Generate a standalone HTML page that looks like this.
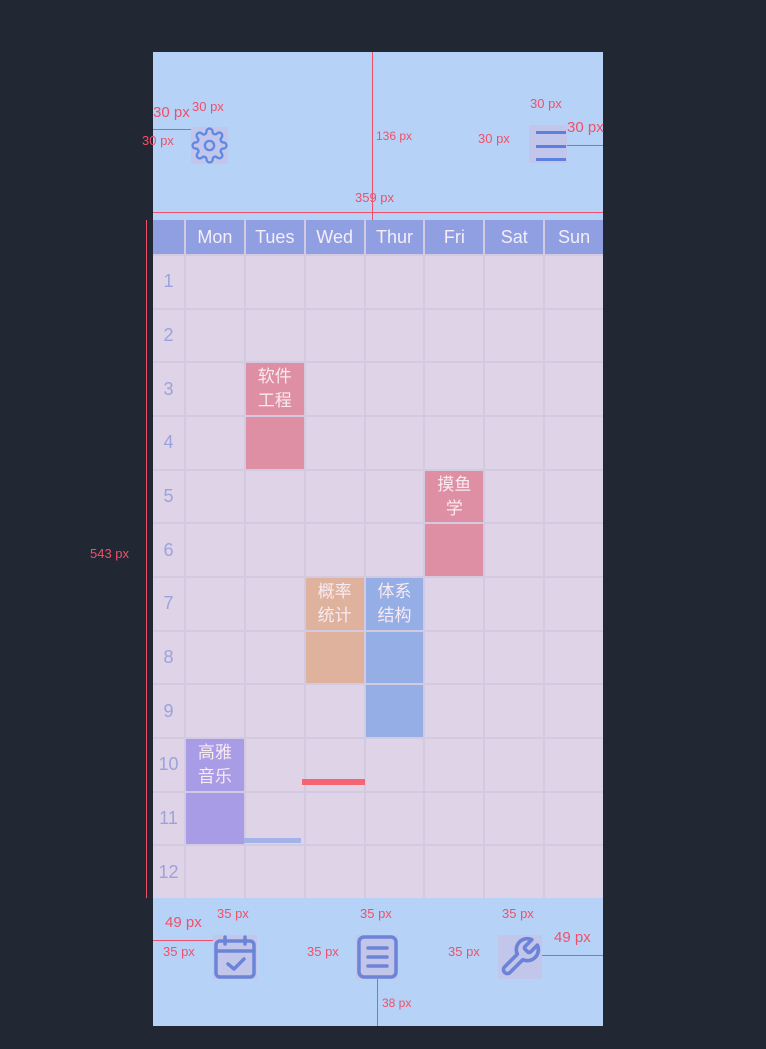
<!DOCTYPE html>
<html><head><meta charset="utf-8"><style>
*{margin:0;padding:0;box-sizing:border-box}
body{width:766px;height:1049px;background:#212733;position:relative;overflow:hidden;font-family:"Liberation Sans","Noto Sans CJK SC",sans-serif}
.frame{position:absolute;left:153px;top:52px;width:450px;height:974px;background:#b6d2f6}
.grid{position:absolute;left:153px;top:220px;width:450px;height:678px;display:grid;grid-template-columns:31px repeat(7,1fr);grid-template-rows:34px repeat(12,1fr);gap:2px;background:#d3cae2}
.grid div{background:#dfd3e7;display:flex;align-items:center;justify-content:center;text-align:center}
.grid .h{background:#8f9fe2;color:#f5eef8;font-size:18px}
.grid .n{color:#9ba3dd;font-size:18px}
.grid .c{color:#f8eaf0;font-size:17px;line-height:24px;align-items:flex-start;padding-top:2px}
.p{background:#df8fa3!important}.o{background:#dfb29e!important}.b{background:#95aee6!important}.v{background:#a99ce6!important}
.ann{position:absolute;color:#f0506a;font-size:13px;font-family:"Liberation Sans",sans-serif}
.ln{position:absolute;background:#f0506a}
.ib{position:absolute;background:#c3c6eb}
</style></head><body>
<div class="frame"></div>
<div class="grid">
<div class="h"></div><div class="h">Mon</div><div class="h">Tues</div><div class="h">Wed</div><div class="h">Thur</div><div class="h">Fri</div><div class="h">Sat</div><div class="h">Sun</div>
<div class="n">1</div><div></div><div></div><div></div><div></div><div></div><div></div><div></div>
<div class="n">2</div><div></div><div></div><div></div><div></div><div></div><div></div><div></div>
<div class="n">3</div><div></div><div class="c p">软件<br>工程</div><div></div><div></div><div></div><div></div><div></div>
<div class="n">4</div><div></div><div class="p"></div><div></div><div></div><div></div><div></div><div></div>
<div class="n">5</div><div></div><div></div><div></div><div></div><div class="c p">摸鱼<br>学</div><div></div><div></div>
<div class="n">6</div><div></div><div></div><div></div><div></div><div class="p"></div><div></div><div></div>
<div class="n">7</div><div></div><div></div><div class="c o">概率<br>统计</div><div class="c b">体系<br>结构</div><div></div><div></div><div></div>
<div class="n">8</div><div></div><div></div><div class="o"></div><div class="b"></div><div></div><div></div><div></div>
<div class="n">9</div><div></div><div></div><div></div><div class="b"></div><div></div><div></div><div></div>
<div class="n">10</div><div class="c v">高雅<br>音乐</div><div></div><div></div><div></div><div></div><div></div><div></div>
<div class="n">11</div><div class="v"></div><div></div><div></div><div></div><div></div><div></div><div></div>
<div class="n">12</div><div></div><div></div><div></div><div></div><div></div><div></div><div></div>
</div>
<div class="ln" style="left:302px;top:779px;width:63px;height:6px;background:#f56470"></div>
<div class="ln" style="left:244px;top:838px;width:57px;height:5px;background:#a3b2e8"></div>

<div class="ib" style="left:191px;top:127px;width:37px;height:37px"></div>
<svg style="position:absolute;left:191px;top:127px" width="37" height="37" viewBox="0 0 24 24" fill="none" stroke="#5b8ae8" stroke-width="1.5"><circle cx="12" cy="12" r="3"/><path d="M19.4 15a1.65 1.65 0 0 0 .33 1.82l.06.06a2 2 0 1 1-2.83 2.83l-.06-.06a1.65 1.65 0 0 0-1.82-.33 1.65 1.65 0 0 0-1 1.51V21a2 2 0 1 1-4 0v-.09A1.65 1.65 0 0 0 9 19.4a1.65 1.65 0 0 0-1.82.33l-.06.06a2 2 0 1 1-2.83-2.83l.06-.06A1.65 1.65 0 0 0 4.68 15a1.65 1.65 0 0 0-1.51-1H3a2 2 0 1 1 0-4h.09A1.65 1.65 0 0 0 4.6 9a1.65 1.65 0 0 0-.33-1.82l-.06-.06a2 2 0 1 1 2.83-2.83l.06.06A1.65 1.65 0 0 0 9 4.68a1.65 1.65 0 0 0 1-1.51V3a2 2 0 1 1 4 0v.09a1.65 1.65 0 0 0 1 1.51 1.65 1.65 0 0 0 1.82-.33l.06-.06a2 2 0 1 1 2.83 2.83l-.06.06A1.65 1.65 0 0 0 19.4 9a1.65 1.65 0 0 0 1.51 1H21a2 2 0 1 1 0 4h-.09a1.65 1.65 0 0 0-1.51 1z"/></svg>
<div class="ib" style="left:529px;top:125px;width:38px;height:38px"></div>
<div class="ln" style="left:536px;top:131px;width:30px;height:3px;background:#5b80e0"></div>
<div class="ln" style="left:536px;top:145px;width:30px;height:3px;background:#5b80e0"></div>
<div class="ln" style="left:536px;top:158px;width:30px;height:3px;background:#5b80e0"></div>

<div class="ib" style="left:213px;top:935px;width:44px;height:44px"></div>
<svg style="position:absolute;left:213px;top:935px" width="44" height="44" viewBox="0 0 44 44" fill="none" stroke="#6c84d8" stroke-width="3.5" stroke-linecap="round" stroke-linejoin="round"><rect x="3" y="6" width="38" height="36" rx="4"/><path d="M3 16h38M12 2v7M32 2v7M15 29l6 5 10-10"/></svg>
<div class="ib" style="left:356px;top:935px;width:42px;height:44px"></div>
<svg style="position:absolute;left:356px;top:935px" width="42" height="44" viewBox="0 0 42 44" fill="none" stroke="#6c84d8" stroke-width="3.5" stroke-linecap="round"><rect x="3" y="2" width="37" height="40" rx="5"/><path d="M12 13h19M12 22h19M12 31h19"/></svg>
<div class="ib" style="left:498px;top:935px;width:44px;height:44px"></div>
<svg style="position:absolute;left:498px;top:935px" width="44" height="44" viewBox="0 0 24 24" fill="none" stroke="#6c84d8" stroke-width="2" stroke-linejoin="round"><path d="M14.7 6.3a1 1 0 0 0 0 1.4l1.6 1.6a1 1 0 0 0 1.4 0l3.77-3.77a6 6 0 0 1-7.94 7.94l-6.91 6.91a2.12 2.12 0 0 1-3-3l6.91-6.91a6 6 0 0 1 7.94-7.94l-3.76 3.76z"/></svg>

<!-- annotations -->
<div class="ln" style="left:372px;top:52px;width:1px;height:168px"></div>
<div class="ln" style="left:153px;top:212px;width:450px;height:1px"></div>
<div class="ln" style="left:146px;top:220px;width:1px;height:678px"></div>
<div class="ln" style="left:153px;top:129px;width:38px;height:1px"></div>
<div class="ln" style="left:567px;top:145px;width:36px;height:1px"></div>
<div class="ln" style="left:153px;top:940px;width:60px;height:1px"></div>
<div class="ln" style="left:542px;top:955px;width:61px;height:1px"></div>
<div class="ln" style="left:377px;top:979px;width:1px;height:47px"></div>
<div class="ann" style="left:376px;top:129px;font-size:12px">136 px</div>
<div class="ann" style="left:355px;top:190px">359 px</div>
<div class="ann" style="left:90px;top:546px">543 px</div>
<div class="ann" style="left:153px;top:104px;font-size:15px">30 px</div>
<div class="ann" style="left:192px;top:99px">30 px</div>
<div class="ann" style="left:142px;top:133px">30 px</div>
<div class="ann" style="left:530px;top:96px">30 px</div>
<div class="ann" style="left:478px;top:131px">30 px</div>
<div class="ann" style="left:567px;top:119px;font-size:15px">30 px</div>
<div class="ann" style="left:165px;top:914px;font-size:15px">49 px</div>
<div class="ann" style="left:217px;top:906px">35 px</div>
<div class="ann" style="left:163px;top:944px">35 px</div>
<div class="ann" style="left:360px;top:906px">35 px</div>
<div class="ann" style="left:307px;top:944px">35 px</div>
<div class="ann" style="left:502px;top:906px">35 px</div>
<div class="ann" style="left:448px;top:944px">35 px</div>
<div class="ann" style="left:554px;top:929px;font-size:15px">49 px</div>
<div class="ann" style="left:382px;top:996px;font-size:12px">38 px</div>
</body></html>
